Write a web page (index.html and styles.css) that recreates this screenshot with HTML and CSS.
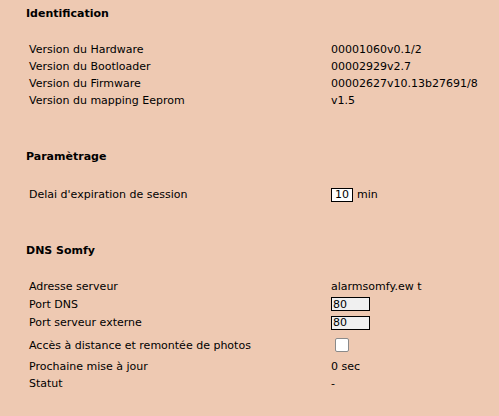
FILE: index.html
```html
<!DOCTYPE html>
<html lang="fr">
<head>
    <meta charset="UTF-8">
    <title>Paramètres système</title>
    <link rel="stylesheet" href="styles.css">
</head>
<body>
    <div class="page">
        <div class="section">
            <h2>Identification</h2>
            <div class="rows">
                <div class="row"><span>Version du Hardware</span><span>00001060v0.1/2</span></div>
                <div class="row"><span>Version du Bootloader</span><span>00002929v2.7</span></div>
                <div class="row"><span>Version du Firmware</span><span>00002627v10.13b27691/8</span></div>
                <div class="row"><span>Version du mapping Eeprom</span><span>v1.5</span></div>
            </div>
        </div>
        <div class="section settings">
            <h2>Paramètrage</h2>
            <div class="rows">
                <div class="row">
                    <span>Delai d'expiration de session</span>
                    <span class="value"><input class="small" type="text" value="10"> min</span>
                </div>
            </div>
        </div>
        <div class="section">
            <h2>DNS Somfy</h2>
            <div class="rows">
                <div class="row"><span>Adresse serveur</span><span>alarmsomfy.ew t</span></div>
                <div class="row field"><span>Port DNS</span><span class="value"><input class="port" type="text" value="80"></span></div>
                <div class="row field"><span>Port serveur externe</span><span class="value"><input class="port" type="text" value="80"></span></div>
                <div class="row check"><span>Accès à distance et remontée de photos</span><span class="value"><span class="box"></span></span></div>
                <div class="row"><span>Prochaine mise à jour</span><span>0 sec</span></div>
                <div class="row"><span>Statut</span><span>-</span></div>
            </div>
        </div>
    </div>
</body>
</html>
```

FILE: styles.css
```css
*{
    margin:0;
    padding:0;
    box-sizing:border-box;
}
body{
    background:#eec9b2;
    color:#000;
    font-family:"DejaVu Sans", Verdana, sans-serif;
    font-size:11px;
    line-height:17px;
}
.page{
    padding:5px 0 0 26px;
}
.section{
    margin-bottom:39px;
}
h2{
    font-size:11px;
    font-weight:bold;
    line-height:17px;
    margin-bottom:19px;
}
.settings h2{
    margin-bottom:21px;
}
.rows{
    padding-left:3px;
}
.row{
    display:grid;
    grid-template-columns:302px auto;
    align-items:center;
    height:17px;
}
.row.field{
    height:18.5px;
}
.row.check{
    height:26px;
}
.value{
    display:flex;
    align-items:center;
    gap:4px;
}
input{
    font-family:inherit;
    font-size:11px;
    color:#000;
    border:1px solid #000;
    outline:none;
    height:14px;
    line-height:12px;
}
.small{
    width:22px;
    background:#fff;
    text-align:center;
}
.port{
    width:39px;
    background:#f0f0f0;
    padding-left:1px;
}
.box{
    display:inline-block;
    width:14px;
    height:14px;
    margin-left:4px;
    background:#fff;
    border:1px solid #8a8a8a;
    border-radius:2px;
}
```
